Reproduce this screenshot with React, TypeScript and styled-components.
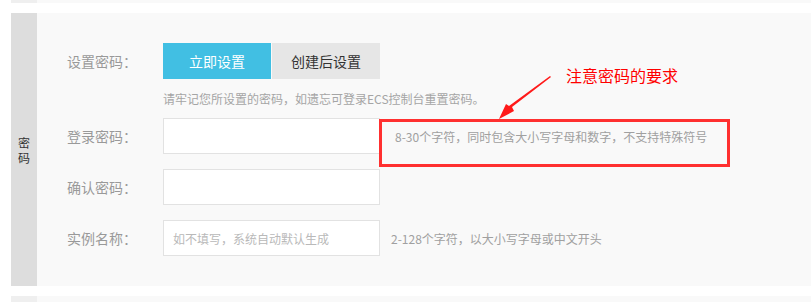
import React from "react";
import styled, { createGlobalStyle } from "styled-components";

const Global = createGlobalStyle`
  html, body { margin: 0; padding: 0; background: #ffffff; overflow: hidden; }
  body { font-family: "Noto Sans CJK SC", "Liberation Sans", sans-serif; }
  * { box-sizing: border-box; }
`;

const Page = styled.div`
  position: relative;
  width: 811px;
  height: 312px;
  overflow: hidden;
  display: flex;
  flex-direction: column;
  gap: 10px;
  padding-left: 11px;
  margin-top: -10px;
`;

const Panel = styled.section<{ $h?: number }>`
  display: flex;
  background: #f9f9f9;
  flex: none;
  ${(p) => (p.$h ? `height: ${p.$h}px;` : "")}
`;

const Side = styled.div<{ $tone?: string }>`
  width: 26px;
  flex: none;
  background: ${(p) => p.$tone || "#dddddd"};
  display: flex;
  align-items: center;
  justify-content: center;
`;

const SideLabel = styled.div`
  width: 13px;
  font-size: 12px;
  line-height: 15px;
  color: #333;
  text-align: center;
  word-break: break-all;
`;

const Content = styled.div`
  flex: 1;
  padding: 30px 0 30px 30px;
  display: flex;
  flex-direction: column;
`;

const Row = styled.div<{ $gap?: number }>`
  display: flex;
  align-items: center;
  height: 36px;
  margin-top: ${(p) => p.$gap ?? 0}px;
`;

const Label = styled.div`
  width: 96px;
  flex: none;
  font-size: 14px;
  color: #999;
`;

const Btn = styled.button<{ $active?: boolean }>`
  width: 108px;
  height: 36px;
  border: none;
  margin: 0 1px 0 0;
  padding: 0;
  font-family: inherit;
  font-size: 14px;
  background: ${(p) => (p.$active ? "#41bfe3" : "#e6e6e6")};
  color: ${(p) => (p.$active ? "#ffffff" : "#333333")};
`;

const Hint = styled.div`
  padding-left: 96px;
  margin: 11px 0 10px;
  font-size: 12px;
  line-height: 18px;
  color: #a5a5a5;
`;

const Input = styled.input`
  width: 217px;
  height: 36px;
  flex: none;
  border: 1px solid #e2e2e2;
  background: #fff;
  padding: 0 9px;
  font-family: inherit;
  font-size: 12px;
  outline: none;
  &::placeholder { color: #b9b9b9; }
`;

const Tip = styled.span<{ $offset: number }>`
  margin-left: ${(p) => p.$offset}px;
  font-size: 12px;
  color: #a0a0a0;
`;

const RedBox = styled.div`
  position: absolute;
  left: 379px;
  top: 129px;
  width: 351px;
  height: 48px;
  border: 3px solid #ff3030;
`;

const Note = styled.div`
  position: absolute;
  left: 566px;
  top: 75px;
  font-size: 16px;
  line-height: 20px;
  color: #ff0000;
`;

const Arrow = styled.svg`
  position: absolute;
  left: 495px;
  top: 84px;
`;

export default function App() {
  return (
    <>
      <Global />
      <Page>
        <Panel $h={13}>
          <Side $tone="#efefef" />
        </Panel>
        <Panel>
          <Side>
            <SideLabel>密码</SideLabel>
          </Side>
          <Content>
            <Row>
              <Label>设置密码：</Label>
              <Btn $active>立即设置</Btn>
              <Btn>创建后设置</Btn>
            </Row>
            <Hint>请牢记您所设置的密码，如遗忘可登录ECS控制台重置密码。</Hint>
            <Row>
              <Label>登录密码：</Label>
              <Input type="password" />
              <Tip $offset={15}>8-30个字符，同时包含大小写字母和数字，不支持特殊符号</Tip>
            </Row>
            <Row $gap={15}>
              <Label>确认密码：</Label>
              <Input type="password" />
            </Row>
            <Row $gap={15}>
              <Label>实例名称：</Label>
              <Input placeholder="如不填写，系统自动默认生成" />
              <Tip $offset={11}>2-128个字符，以大小写字母或中文开头</Tip>
            </Row>
          </Content>
        </Panel>
        <Panel $h={20}>
          <Side $tone="#efefef" />
        </Panel>
        <RedBox />
        <Note>注意密码的要求</Note>
        <Arrow width="60" height="48" viewBox="0 0 60 48">
          <polygon points="55,2 56,3 17,33 19,37 4,45 11,30 14,32" fill="#ff1a1a" />
        </Arrow>
      </Page>
    </>
  );
}
